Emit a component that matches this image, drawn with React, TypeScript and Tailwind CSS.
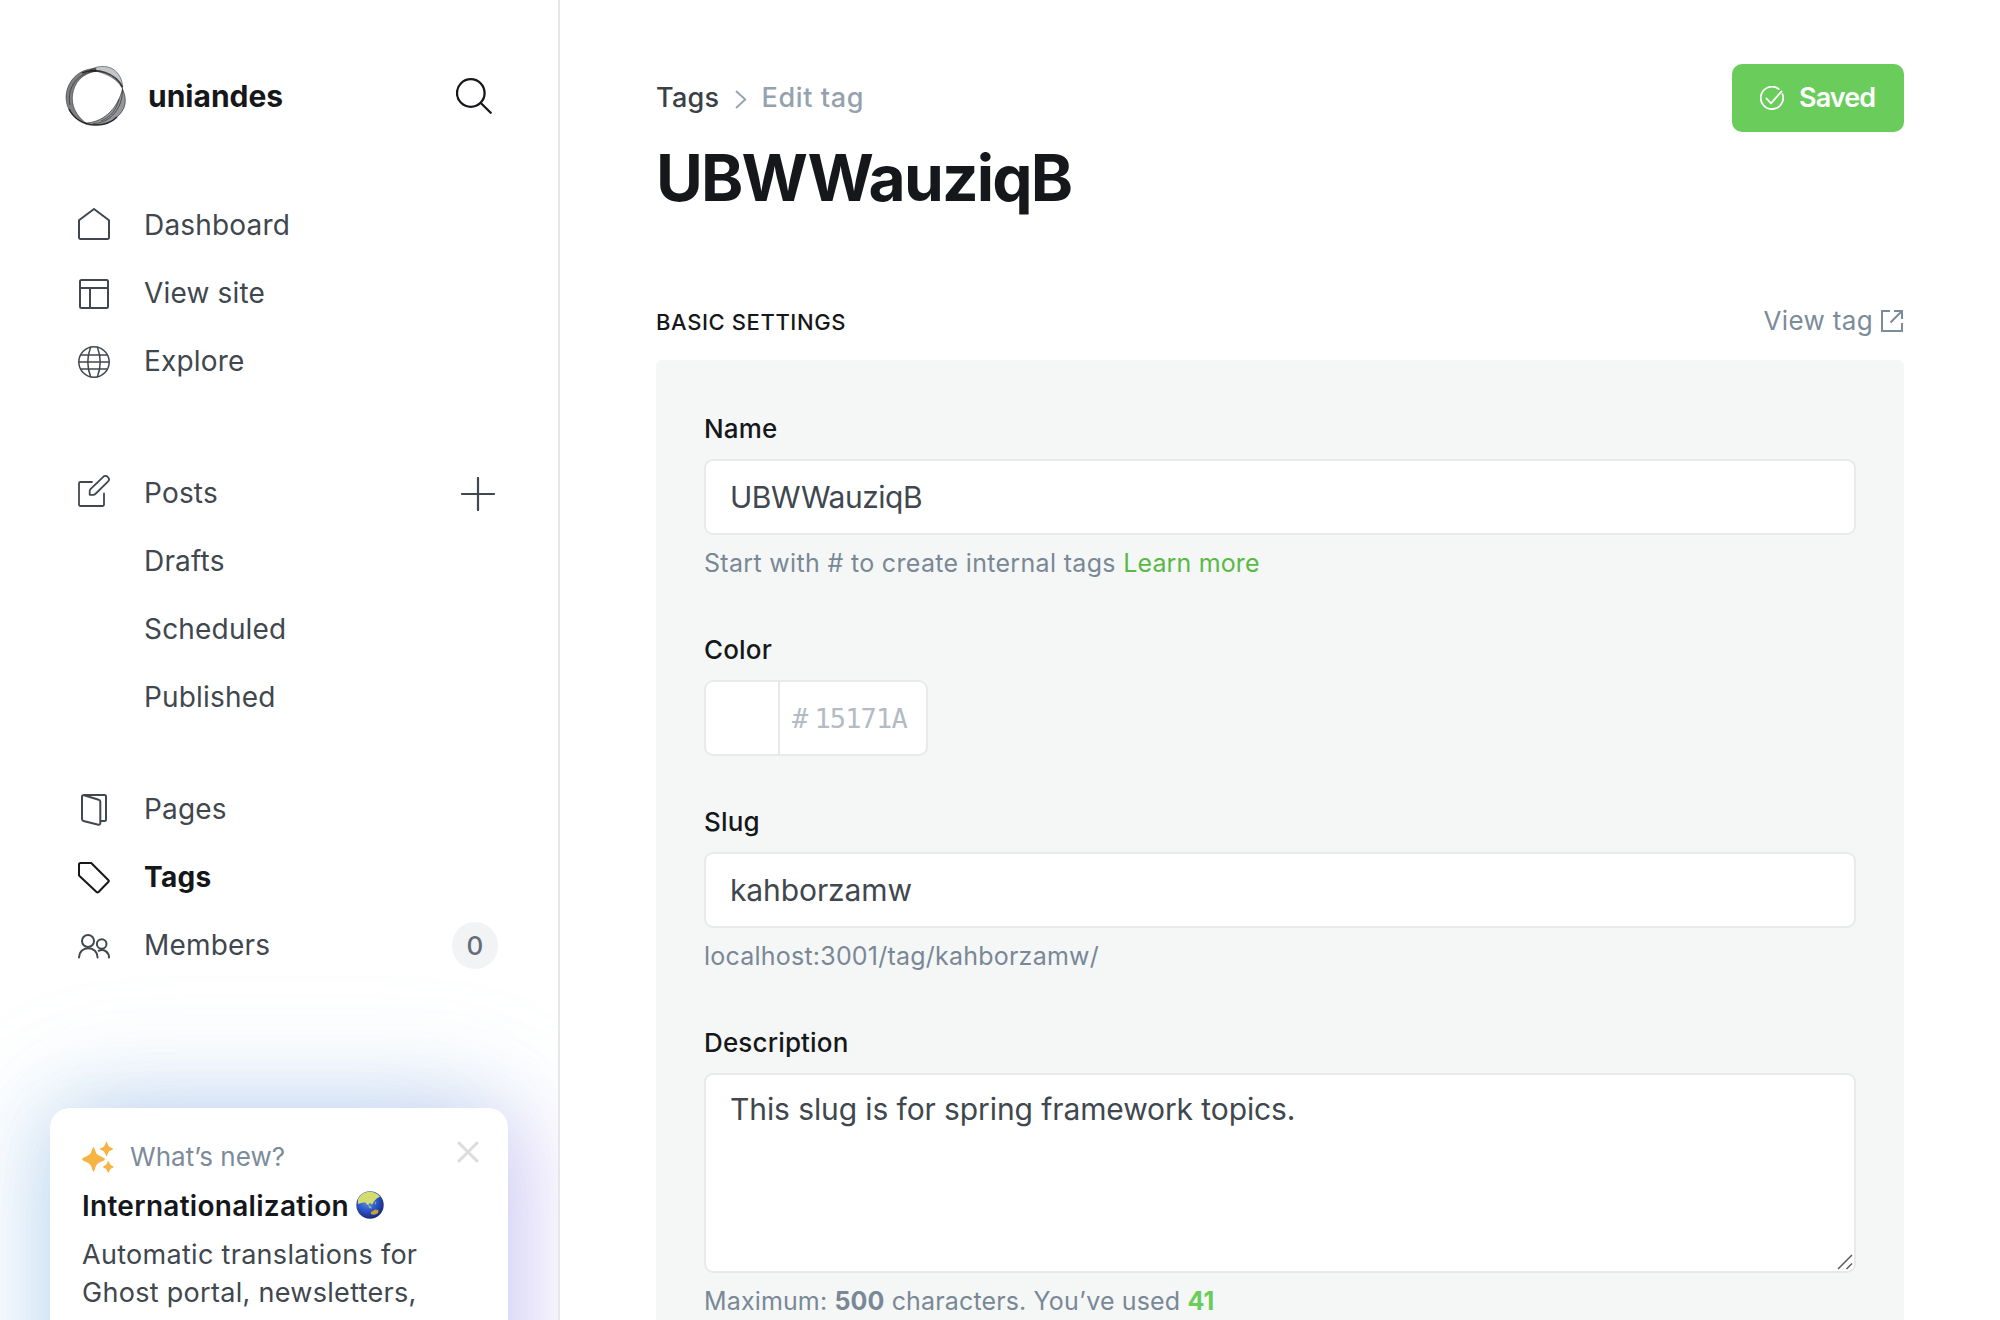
import React from "react";

const ic = { fill: "none", stroke: "currentColor", strokeLinecap: "round" as const, strokeLinejoin: "round" as const };

function Svg({ w = 32, h = 32, sw = 2, className = "", children }: { w?: number; h?: number; sw?: number; className?: string; children: React.ReactNode }) {
  return (
    <svg width={w} height={h} viewBox={`0 0 ${w} ${h}`} strokeWidth={sw} {...ic} className={`block shrink-0 ${className}`}>
      {children}
    </svg>
  );
}

const HomeIcon = () => (
  <Svg className="-mt-0.5">
    <path d="M1 12.3 16 1l15 11.3V29.5a1.5 1.5 0 0 1-1.5 1.5h-27A1.5 1.5 0 0 1 1 29.5Z" />
  </Svg>
);
const SiteIcon = () => (
  <Svg>
    <rect x="2" y="2" width="28" height="28" rx="1.5" />
    <path d="M2 10h28M12 10v20" />
  </Svg>
);
const GlobeIcon = () => (
  <Svg sw={1.5}>
    <circle cx="16" cy="16" r="15.2" />
    <path d="M12.6 1.2c-3.4 9-3.4 20.6 0 29.6M19.4 1.2c3.4 9 3.4 20.6 0 29.6M1 16h30M3 9h26M3 23h26" />
  </Svg>
);
const PostsIcon = () => (
  <Svg sw={1.8} className="-mt-[3px]">
    <path d="M14 7H2.5A1.5 1.5 0 0 0 1 8.5V29.5A1.5 1.5 0 0 0 2.5 31h22a1.5 1.5 0 0 0 1.5-1.5V18.5" />
    <path d="M11.7 19.8v-3.6c0-.8.3-1.5.8-2L25 2.1a3.2 3.2 0 0 1 4.9 0c1.3 1.3 1.3 3.3 0 4.6L17.3 19c-.5.5-1.2.8-2 .8Z" />
  </Svg>
);
const PagesIcon = () => (
  <Svg className="ml-px">
    <path d="M22 27h3.5a1.5 1.5 0 0 0 1.5-1.5V2.5A1.5 1.5 0 0 0 25.5 1H5" />
    <path d="M5 1.2 19.7 5.7a2 2 0 0 1 1.6 1.9V29.3a1.5 1.5 0 0 1-1.9 1.4L4.5 27A2 2 0 0 1 3 25.1V2.500C3 1.500 4 1 5 1.200" />
  </Svg>
);
const TagIcon = () => (
  <Svg>
    <path d="M1 2.500A1.500 1.500 0 0 1 2.500 1H13.200L30.500 18.300a1 1 0 0 1 0 1.500L20.300 30.200a1 1 0 0 1-1.500 0L1 13.500Z" />
  </Svg>
);
const MembersIcon = () => (
  <Svg>
    <circle cx="10" cy="11" r="6" />
    <circle cx="23.700" cy="14" r="4.800" />
    <path d="M1 27.500c0-5.400 4-9.300 9.300-9.300s9.300 3.900 9.300 9.300M20.700 20.700c5.500-2.200 10.300 1.600 10.300 6.800" />
  </Svg>
);

function Nav({ icon, label, active, right }: { icon?: React.ReactNode; label: string; active?: boolean; right?: React.ReactNode }) {
  return (
    <li className={`flex h-[68px] items-center pt-[2px] pl-[78px] pr-[62px] text-[28px] ${active ? "font-bold tracking-[0.3px] text-[#15171a]" : "tracking-[0.180px] text-[#40474e]"}`}>
      <span className="mr-[34px] h-8 w-8 shrink-0">{icon}</span>
      <span className="-mt-[2px] grow">{label}</span>
      {right}
    </li>
  );
}

function Logo() {
  return (
    <svg width="62" height="62" viewBox="0 0 62 62" className="block shrink-0" fill="#15171a" stroke="#15171a">
      <path fillOpacity="0.25" strokeOpacity="0.6" strokeWidth="0.800" d="M25 5C32 .5 41 .5 47 3.500 54 7.500 58 15 57.500 24 54 16 44 8 25 5Z" />
      <path fillOpacity="0.55" strokeOpacity="0.6" strokeWidth="0.800" d="M31 3.500C12 3.500 1 18 1 33 1.500 46 10 55 22 59 10 50 6.500 40 7.500 30 9.500 17 17 9 31 6Z" />
      <path fillOpacity="0.45" strokeOpacity="0.7" strokeWidth="0.800" d="M57.500 24C63 36 60 45 52 52 44 60 32 62 20 58 36 58 52 46 57.500 24Z" />
      <g fill="none">
        <path strokeWidth="1.600" d="M17 8C32 2 50 8 57.500 22M4 44c5 10 15 16.500 27 16 10 0 17-4 21-8" strokeOpacity="0.800" />
        <path strokeWidth="0.900" strokeOpacity="0.6" d="M57.500 24C58 42 46 58.500 28 58.500M5 40C1 22 14 6 32 6.500M54 34c-2 10-8 18-18 22" />
      </g>
    </svg>
  );
}

const label = "mb-[10px] block text-[26px] leading-[41px] font-medium tracking-[0.150px] text-[#15171a]";
const box = "w-full rounded-[9px] border-2 border-[#e8eae9] bg-white text-[30px] text-[#40474e]";
const help = "mt-[9px] mb-[46px] text-[25px] leading-[39px] text-[#7a8896]";

export default function App() {
  return (
    <div className="flex h-[1320px] w-[2000px] overflow-hidden bg-white font-['Inter',sans-serif] text-[#15171a]">
      <aside className="flex h-full w-[560px] shrink-0 flex-col overflow-hidden border-r-2 border-[#e6e7e9]">
        <header className="mt-[64px] flex h-16 shrink-0 items-center pl-[65px] pr-[66px]">
          <Logo />
          <span className="ml-[21px] grow text-[30px] font-bold">uniandes</span>
          <Svg w={36} h={36} sw={2.300}>
            <circle cx="14.800" cy="15" r="13.800" />
            <path d="m24.800 25 9.900 9.700" />
          </Svg>
        </header>
        <ul className="mt-[63px]">
          <Nav icon={<HomeIcon />} label="Dashboard" />
          <Nav icon={<SiteIcon />} label="View site" />
          <Nav icon={<GlobeIcon />} label="Explore" />
        </ul>
        <ul className="mt-[64px]">
          <Nav icon={<PostsIcon />} label="Posts" right={<Svg w={34} h={34} sw={2.200} className="mr-px"><path d="M17 1v32M1 17h32" /></Svg>} />
          <Nav label="Drafts" />
          <Nav label="Scheduled" />
          <Nav label="Published" />
        </ul>
        <ul className="mt-[44px]">
          <Nav icon={<PagesIcon />} label="Pages" />
          <Nav icon={<TagIcon />} label="Tags" active />
          <Nav
            icon={<MembersIcon />}
            label="Members"
            right={<span className="-mt-[2px] -mr-[2px] flex h-[47px] w-[46px] items-center justify-center rounded-full bg-[#f1f3f4] text-[26px] font-medium tracking-normal text-[#626d79]">0</span>}
          />
        </ul>
        <section className="relative mt-[129px] ml-[50px] h-[400px] w-[458px] shrink-0 rounded-[20px] bg-white px-8 pt-[29px] shadow-[0_0_90px_rgba(125,162,225,0.44),60px_0_60px_-20px_rgba(255,130,255,0.13),-40px_-20px_80px_-30px_rgba(100,220,230,0.09),0_-20px_120px_rgba(160,205,230,0.15)]">
          <div className="flex items-center">
            <svg width="32" height="32" viewBox="0 0 32 32" fill="#f6b445" className="block shrink-0">
              <path d="M11.500 6c.8 0 1.300 2.800 3 6.500 1 2.200 8.500 4.200 8.500 5.700s-7.500 3.500-8.500 5.700c-1.700 3.700-2.200 6.600-3 6.600s-1.300-2.900-3-6.600C7.500 21.700 0 19.700 0 18.200s7.500-3.500 8.500-5.700c1.700-3.700 2.200-6.500 3-6.500Z" />
              <path d="M24.500.4c.5 0 1.200 3 2.300 4.800 1 1.300 4.400 2 4.400 2.800s-3.400 1.500-4.400 2.800c-1.100 1.800-1.800 4.800-2.300 4.800s-1.200-3-2.300-4.800c-1-1.300-4.400-2-4.400-2.800s3.400-1.500 4.400-2.800c1.100-1.800 1.800-4.800 2.300-4.800Z" />
              <path d="M26.300 20c.5 0 1 2 2 3.600.9 1 3.300 1.600 3.300 2.300s-2.400 1.300-3.300 2.300c-1 1.600-1.500 3.600-2 3.600s-1-2-2-3.600c-.9-1-3.300-1.600-3.300-2.300s2.400-1.300 3.300-2.300c1-1.600 1.500-3.600 2-3.600Z" />
            </svg>
            <span className="ml-[16px] text-[26px] leading-[40px] tracking-[0.050px] text-[#7c8b9a]">What’s new?</span>
          </div>
          <svg width="22" height="22" viewBox="0 0 22 22" className="absolute top-[33px] right-[29px] text-[#dcdcdc]" {...ic} strokeWidth="3">
            <path d="m2 2 18 18M20 2 2 20" />
          </svg>
          <h3 className="mt-[8px] flex items-center text-[28px] leading-[42px] font-semibold tracking-[0.290px]">
            Internationalization
            <svg width="28" height="28" viewBox="0 0 28 28" className="-mt-0.5 ml-[7px] block">
              <defs>
                <radialGradient id="sea" cx="0.400" cy="0.350" r="0.700">
                  <stop offset="0" stopColor="#5f96ea" />
                  <stop offset="0.550" stopColor="#2c51c4" />
                  <stop offset="1" stopColor="#18246b" />
                </radialGradient>
              </defs>
              <circle cx="14" cy="14" r="13.700" fill="url(#sea)" />
              <path fill="#d3dc6c" d="M2 8.500C4 4 8 1 13 .8c5 0 9 2 11 5l-3 1.500-3 3-2 3.500-2-2-2 2.500-3-3L5 12l-3 1Z" />
              <path fill="#c2a23a" d="m15 21 4-2.500 3.500.8-.5 3-3.500 1.500-3.500-.5Z" />
              <path fill="#7fb8a0" d="m12 14 3 1 1 2.500-3-.5ZM19 10.500l1.500 1L19 14Z" />
            </svg>
          </h3>
          <p className="mt-[9px] text-[27px] leading-[38px] tracking-[0.3px] whitespace-nowrap text-[#40474e]">
            Automatic translations for
            <br />
            Ghost portal, newsletters,
          </p>
        </section>
      </aside>

      <main className="h-full grow px-24 pt-16">
        <div className="flex h-[68px] items-center justify-between">
          <nav className="flex items-center text-[27px] font-medium tracking-[0.3px]">
            <span className="text-[#394047]">Tags</span>
            <Svg w={12} h={19} sw={1.800} className="mt-[2px] mr-[14px] ml-[16px] text-[#95a1ad]">
              <path d="m1.500 1.500 8.800 8-8.800 8" />
            </Svg>
            <span className="tracking-[0.650px] text-[#95a1ad]">Edit tag</span>
          </nav>
          <button className="flex h-[68px] w-[172px] items-center rounded-[10px] bg-[#6acd5b] pl-7 text-[27px] font-semibold tracking-[-0.900px] text-white">
            <Svg w={24} h={24} sw={1.800}>
              <path d="M22.500 8.200A11.200 11.200 0 1 1 18.700 3" />
              <path d="m6.500 12.500 4.500 4.800L21.500 5.500" />
            </Svg>
            <span className="ml-[15px]">Saved</span>
          </button>
        </div>
        <h1 className="mt-[6px] h-[80px] text-[64px] leading-[80px] font-bold tracking-[-1.800px]">UBWWauziqB</h1>
        <div className="mt-[84px] flex h-[38px] items-center justify-between">
          <h4 className="pt-[2px] text-[22px] font-medium tracking-[0.600px] uppercase">Basic settings</h4>
          <a className="mb-[2px] flex items-center pr-px text-[26px] tracking-[0.350px] text-[#7c8b9a]">
            View tag
            <Svg w={22} h={22} sw={2} className="mt-[2px] ml-[8px]">
              <path strokeLinecap="butt" strokeLinejoin="miter" d="M9 1H1v20h20v-8M13 1h8v8M21 1 9.500 12.500" />
            </Svg>
          </a>
        </div>
        <section className="mt-[20px] h-[1000px] rounded-[6px] bg-[#f4f7f6] p-12">
          <label className={label}>Name</label>
          <div className={`${box} flex h-[76px] items-center px-6 tracking-[-0.450px]`}>UBWWauziqB</div>
          <p className={`${help} tracking-[0.320px]`}>
            Start with # to create internal tags <span className="tracking-[0.150px] text-[#5ab946]">Learn more</span>
          </p>
          <label className={label}>Color</label>
          <div className="mb-[45px] flex h-[76px] w-[224px] rounded-[9px] border-2 border-[#e8eae9] bg-white">
            <span className="w-[74px] border-r-2 border-[#e8eae9]" />
            <span className="flex items-center pt-[2px] pl-[12px] font-['DejaVu_Sans_Mono',monospace] text-[27px] tracking-[-0.850px] text-[#b3bbc5]">
              <span className="mr-[7px]">#</span>15171A
            </span>
          </div>
          <label className={label}>Slug</label>
          <div className={`${box} flex h-[76px] items-center px-6 tracking-[-0.100px]`}>kahborzamw</div>
          <p className={`${help} tracking-[0.220px]`}>localhost:3001/tag/kahborzamw/</p>
          <label className={label}>Description</label>
          <div className={`${box} relative h-[200px] px-6 pt-[11px] leading-[46px] tracking-[-0.100px]`}>
            This slug is for spring framework topics.
            <svg width="16" height="16" viewBox="0 0 16 16" className="absolute right-[1px] bottom-[1px]" stroke="#5a5a5a" strokeWidth="1.500">
              <path d="M1 15 15 1M9.500 15 15 9.500" />
            </svg>
          </div>
          <p className={`${help} tracking-[0.140px]`}>
            Maximum: <b>500</b> characters. You’ve used <b className="text-[#6acd5b]">41</b>
          </p>
        </section>
      </main>
    </div>
  );
}
